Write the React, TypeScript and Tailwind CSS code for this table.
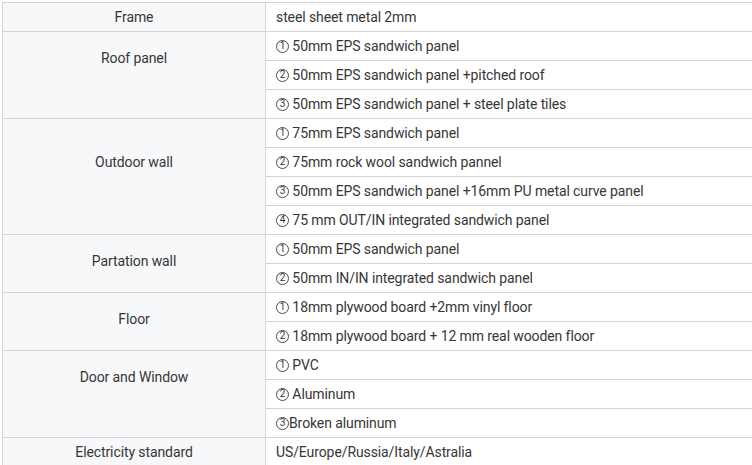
import React from "react";

type Group = { label: string; items: string[]; pt?: string };

const groups: Group[] = [
  { label: "Frame", items: ["steel sheet metal 2mm"] },
  {
    label: "Roof panel",
    pt: "pt-[16px]",
    items: [
      "① 50mm EPS sandwich panel",
      "② 50mm EPS sandwich panel +pitched roof",
      "③ 50mm EPS sandwich panel + steel plate tiles",
    ],
  },
  {
    label: "Outdoor wall",
    pt: "pt-[33px]",
    items: [
      "① 75mm EPS sandwich panel",
      "② 75mm rock wool sandwich pannel",
      "③ 50mm EPS sandwich panel +16mm PU metal curve panel",
      "④ 75 mm OUT/IN integrated sandwich panel",
    ],
  },
  {
    label: "Partation wall",
    pt: "pt-[16px]",
    items: ["① 50mm EPS sandwich panel", "② 50mm IN/IN integrated sandwich panel"],
  },
  {
    label: "Floor",
    pt: "pt-[16px]",
    items: ["① 18mm plywood board +2mm vinyl floor", "② 18mm plywood board + 12 mm real wooden floor"],
  },
  {
    label: "Door and Window",
    pt: "pt-[16px]",
    items: ["① PVC", "② Aluminum", "③Broken aluminum"],
  },
  { label: "Electricity standard", items: ["US/Europe/Russia/Italy/Astralia"] },
];

const digitMap: Record<string, string> = { "①": "1", "②": "2", "③": "3", "④": "4" };

function Item({ text }: { text: string }) {
  const first = text.charAt(0);
  const d = digitMap[first];
  if (!d) return <span>{text}</span>;
  return (
    <span className="inline-flex items-center whitespace-pre">
      <span
        aria-label={first}
        className="inline-flex w-[13px] h-[13px] rounded-full border border-[#4a4a4a] items-center justify-center text-[10px] leading-none tracking-normal mt-[1px]"
      >
        {d}
      </span>
      {text.slice(1)}
    </span>
  );
}

export default function App() {
  return (
    <div
      className="w-[752px] h-[465px] overflow-hidden bg-white text-[14px] text-[#363636] tracking-[-0.1px]"
      style={{ fontFamily: "Roboto, 'Noto Sans', 'DejaVu Sans', sans-serif" }}
    >
      <div className="pt-[2px] pl-[2px]">
        <div className="w-[780px] border-t border-l border-[#d4d4d4]">
          {groups.map((g, gi) => (
            <div key={gi} className="flex">
              <div
                className={
                  "w-[263px] shrink-0 bg-[#f7f8fa] border-r border-b border-[#d4d4d4] flex justify-center leading-[20px] " +
                  (g.pt ? g.pt : "items-center pb-[1px]")
                }
              >
                <span>{g.label}</span>
              </div>
              <div className="flex-1 flex flex-col">
                {g.items.map((it, ii) => (
                  <div
                    key={ii}
                    className="h-[29px] border-b border-[#d4d4d4] flex items-center pl-[10px] pb-[1px] leading-[20px]"
                  >
                    <Item text={it} />
                  </div>
                ))}
              </div>
            </div>
          ))}
        </div>
      </div>
    </div>
  );
}
